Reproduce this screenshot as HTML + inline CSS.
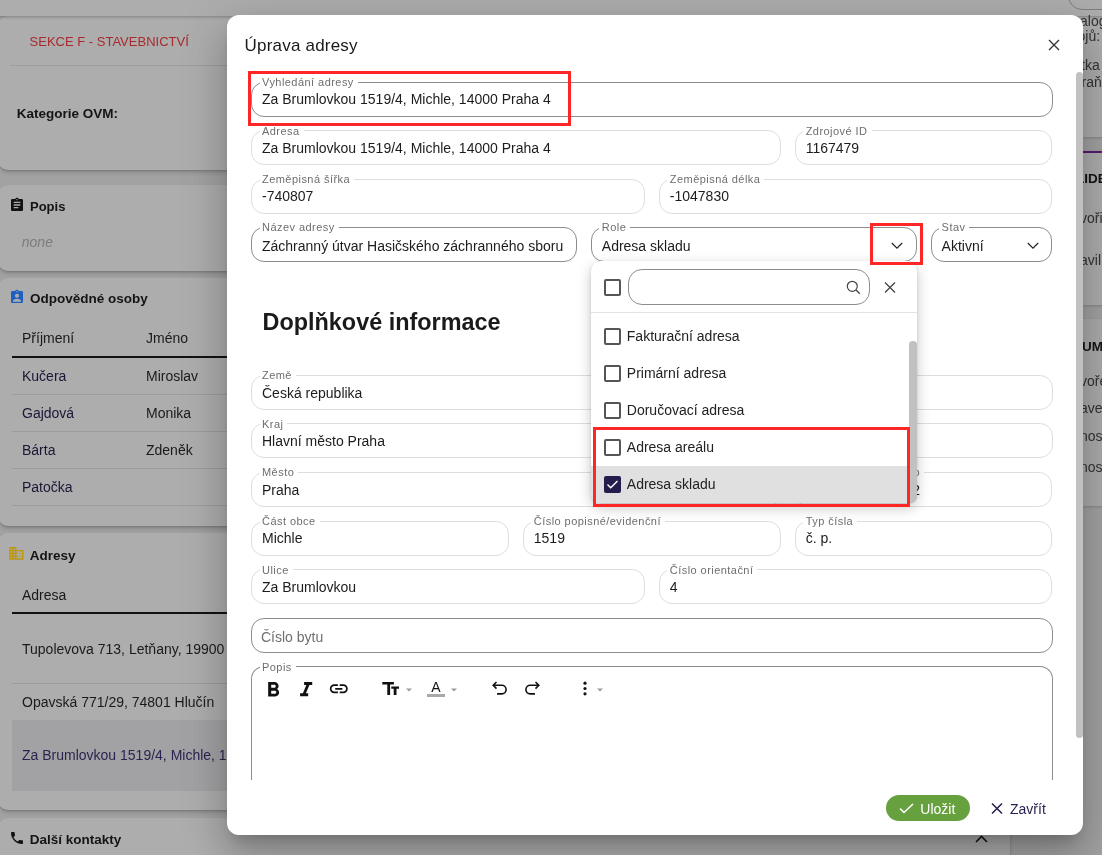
<!DOCTYPE html>
<html><head><meta charset="utf-8"><title>Úprava adresy</title>
<style>
html,body{margin:0;padding:0;}
body{width:1102px;height:855px;overflow:hidden;position:relative;background:#a2a2a2;font-family:"Liberation Sans",sans-serif;}
#w{position:absolute;left:0;top:0;width:1102px;height:855px;will-change:transform;}
.a{position:absolute;}
.t{position:absolute;white-space:nowrap;}
.lab{font-size:11px;line-height:11px;letter-spacing:0.45px;color:#6e6e6e;background:#fff;padding:0 4px 0 2.5px;}
</style></head><body><div id="w">
<div class="a" style="left:-2px;top:16px;width:1012px;height:154px;background:#adadad;border-radius:10px;box-shadow:0 3px 5px -1px rgba(0,0,0,0.2),0 1px 2px 0 rgba(0,0,0,0.12)"></div>
<div class="t" style="left:29.6px;top:35px;font-size:13px;line-height:13px;font-weight:400;color:#a82a2e;font-style:normal;">SEKCE F - STAVEBNICTVÍ</div>
<div class="a" style="left:10px;top:65px;width:990px;height:1px;background:#9d9d9d"></div>
<div class="t" style="left:16.7px;top:107px;font-size:13.5px;line-height:13.5px;font-weight:700;color:#141414;font-style:normal;">Kategorie OVM:</div>
<div class="a" style="left:-2px;top:184.5px;width:1012px;height:86.0px;background:#adadad;border-radius:10px;box-shadow:0 3px 5px -1px rgba(0,0,0,0.2),0 1px 2px 0 rgba(0,0,0,0.12)"></div>
<div class="t" style="left:30px;top:200px;font-size:13px;line-height:13px;font-weight:700;color:#141414;font-style:normal;">Popis</div>
<div class="t" style="left:21.8px;top:235px;font-size:14px;line-height:14px;font-weight:400;color:#7c7c7c;font-style:italic;">none</div>
<div class="a" style="left:-2px;top:277.5px;width:1012px;height:248.5px;background:#adadad;border-radius:10px;box-shadow:0 3px 5px -1px rgba(0,0,0,0.2),0 1px 2px 0 rgba(0,0,0,0.12)"></div>
<div class="t" style="left:30px;top:292px;font-size:13.5px;line-height:13.5px;font-weight:700;color:#141414;font-style:normal;">Odpovědné osoby</div>
<div class="t" style="left:22px;top:331px;font-size:14px;line-height:14px;font-weight:400;color:#1a1a1a;font-style:normal;">Příjmení</div>
<div class="t" style="left:146px;top:331px;font-size:14px;line-height:14px;font-weight:400;color:#1a1a1a;font-style:normal;">Jméno</div>
<div class="a" style="left:12px;top:356px;width:250px;height:2px;background:#111"></div>
<div class="t" style="left:22px;top:369px;font-size:14px;line-height:14px;font-weight:400;color:#1a1636;font-style:normal;">Kučera</div>
<div class="t" style="left:146px;top:369px;font-size:14px;line-height:14px;font-weight:400;color:#1a1a1a;font-style:normal;">Miroslav</div>
<div class="a" style="left:12px;top:394px;width:250px;height:1px;background:#9c9c9c"></div>
<div class="t" style="left:22px;top:406px;font-size:14px;line-height:14px;font-weight:400;color:#1a1636;font-style:normal;">Gajdová</div>
<div class="t" style="left:146px;top:406px;font-size:14px;line-height:14px;font-weight:400;color:#1a1a1a;font-style:normal;">Monika</div>
<div class="a" style="left:12px;top:431px;width:250px;height:1px;background:#9c9c9c"></div>
<div class="t" style="left:22px;top:443px;font-size:14px;line-height:14px;font-weight:400;color:#1a1636;font-style:normal;">Bárta</div>
<div class="t" style="left:146px;top:443px;font-size:14px;line-height:14px;font-weight:400;color:#1a1a1a;font-style:normal;">Zdeněk</div>
<div class="a" style="left:12px;top:468px;width:250px;height:1px;background:#9c9c9c"></div>
<div class="t" style="left:22px;top:480px;font-size:14px;line-height:14px;font-weight:400;color:#1a1636;font-style:normal;">Patočka</div>
<div class="a" style="left:12px;top:505px;width:250px;height:1px;background:#9c9c9c"></div>
<div class="a" style="left:-2px;top:533px;width:1012px;height:276.5px;background:#adadad;border-radius:10px;box-shadow:0 3px 5px -1px rgba(0,0,0,0.2),0 1px 2px 0 rgba(0,0,0,0.12)"></div>
<div class="t" style="left:29.7px;top:549px;font-size:13.5px;line-height:13.5px;font-weight:700;color:#141414;font-style:normal;">Adresy</div>
<div class="t" style="left:22px;top:588px;font-size:14px;line-height:14px;font-weight:400;color:#1a1a1a;font-style:normal;">Adresa</div>
<div class="a" style="left:12px;top:611.5px;width:250px;height:2px;background:#111"></div>
<div class="t" style="left:22px;top:642px;font-size:14px;line-height:14px;font-weight:400;color:#1a1a1a;font-style:normal;">Tupolevova 713, Letňany, 19900</div>
<div class="a" style="left:12px;top:683px;width:250px;height:1px;background:#9c9c9c"></div>
<div class="t" style="left:22px;top:695px;font-size:14px;line-height:14px;font-weight:400;color:#1a1a1a;font-style:normal;">Opavská 771/29, 74801 Hlučín</div>
<div class="a" style="left:12px;top:720px;width:1000px;height:70.5px;background:#a2a2a4"></div>
<div class="t" style="left:22px;top:748px;font-size:14px;line-height:14px;font-weight:400;color:#2a2550;font-style:normal;">Za Brumlovkou 1519/4, Michle, 14000 Praha 4</div>
<div class="a" style="left:-2px;top:818px;width:1012px;height:82px;background:#adadad;border-radius:10px;box-shadow:0 3px 5px -1px rgba(0,0,0,0.2),0 1px 2px 0 rgba(0,0,0,0.12)"></div>
<div class="t" style="left:29.7px;top:833px;font-size:13.5px;line-height:13.5px;font-weight:700;color:#141414;font-style:normal;">Další kontakty</div>
<svg class="a" style="left:8.7px;top:197.2px" width="16" height="16" viewBox="0 0 24 24"><path d="M19 3h-4.18C14.4 1.84 13.3 1 12 1c-1.3 0-2.4.84-2.82 2H5c-1.1 0-2 .9-2 2v14c0 1.1.9 2 2 2h14c1.1 0 2-.9 2-2V5c0-1.1-.9-2-2-2zm-7 0c.55 0 1 .45 1 1s-.45 1-1 1-1-.45-1-1 .45-1 1-1zm2 14H7v-2h7v2zm3-4H7v-2h10v2zm0-4H7V7h10v2z" fill="#111111"/></svg>
<svg class="a" style="left:8.7px;top:289.4px" width="16" height="16" viewBox="0 0 24 24"><path d="M19 3h-4.18C14.4 1.84 13.3 1 12 1c-1.3 0-2.4.84-2.82 2H5c-1.1 0-2 .9-2 2v14c0 1.1.9 2 2 2h14c1.1 0 2-.9 2-2V5c0-1.1-.9-2-2-2zm-7 0c.55 0 1 .45 1 1s-.45 1-1 1-1-.45-1-1 .45-1 1-1zm0 4c1.66 0 3 1.34 3 3s-1.34 3-3 3-3-1.34-3-3 1.34-3 3-3zm6 12H6v-1.4c0-2 4-3.1 6-3.1s6 1.1 6 3.1V19z" fill="#1f5fc0"/></svg>
<svg class="a" style="left:8.4px;top:545.1px" width="16.8" height="16.8" viewBox="0 0 24 24"><path d="M12 7V3H2v18h20V7H12zM6 19H4v-2h2v2zm0-4H4v-2h2v2zm0-4H4V9h2v2zm0-4H4V5h2v2zm4 12H8v-2h2v2zm0-4H8v-2h2v2zm0-4H8V9h2v2zm0-4H8V5h2v2zm10 12h-8v-2h2v-2h-2v-2h2v-2h-2V9h8v10zm-2-8h-2v2h2v-2zm0 4h-2v2h2v-2z" fill="#bb960e"/></svg>
<svg class="a" style="left:8.7px;top:829.6px" width="16" height="16" viewBox="0 0 24 24"><path d="M6.62 10.79c1.44 2.83 3.76 5.14 6.59 6.59l2.2-2.2c.27-.27.67-.36 1.02-.24 1.12.37 2.33.57 3.57.57.55 0 1 .45 1 1V20c0 .55-.45 1-1 1-9.39 0-17-7.61-17-17 0-.55.45-1 1-1h3.5c.55 0 1 .45 1 1 0 1.25.2 2.45.57 3.57.11.35.03.74-.25 1.02l-2.2 2.2z" fill="#111111"/></svg>
<svg class="a" style="left:975px;top:835px" width="13" height="8" viewBox="0 0 13 8"><path d="M1 7L6.5 1.5 12 7" stroke="#141414" stroke-width="1.6" fill="none"/></svg>
<div class="a" style="left:1022px;top:-10px;width:100px;height:146.5px;background:#adadad;border-radius:10px;box-shadow:0 1px 3px rgba(0,0,0,0.18)"></div>
<div class="a" style="left:-5px;top:-20px;width:1200px;height:36px;background:#adadad;box-shadow:0 1px 3px rgba(0,0,0,0.25)"></div>
<div class="a" style="left:1067.5px;top:-20px;width:60px;height:29.5px;border:1px solid #7e7e7e;border-radius:14px;box-sizing:border-box"></div>
<div class="t" style="left:1080px;top:14px;font-size:14px;line-height:14px;font-weight:400;color:#333333;font-style:normal;">alog</div>
<div class="t" style="left:1077.5px;top:29px;font-size:14px;line-height:14px;font-weight:400;color:#333333;font-style:normal;">ojů:</div>
<div class="t" style="left:1081px;top:58px;font-size:14px;line-height:14px;font-weight:400;color:#333333;font-style:normal;">tka</div>
<div class="t" style="left:1081.5px;top:75px;font-size:14px;line-height:14px;font-weight:400;color:#333333;font-style:normal;">raň</div>
<div class="a" style="left:1022px;top:150.5px;width:100px;height:154.0px;background:#adadad;border-radius:10px;box-shadow:0 1px 3px rgba(0,0,0,0.18)"></div>
<div class="a" style="left:1022px;top:150.5px;width:100px;height:2px;background:#5b1877"></div>
<div class="t" style="left:1076px;top:172px;font-size:13.5px;line-height:13.5px;font-weight:700;color:#141414;font-style:normal;">LIDE</div>
<div class="t" style="left:1080px;top:211px;font-size:14px;line-height:14px;font-weight:400;color:#333333;font-style:normal;">voři</div>
<div class="t" style="left:1080px;top:253px;font-size:14px;line-height:14px;font-weight:400;color:#333333;font-style:normal;">avil</div>
<div class="a" style="left:1022px;top:318.5px;width:100px;height:187.0px;background:#adadad;border-radius:10px;box-shadow:0 1px 3px rgba(0,0,0,0.18)"></div>
<div class="t" style="left:1082px;top:340px;font-size:13.5px;line-height:13.5px;font-weight:700;color:#141414;font-style:normal;">UM</div>
<div class="t" style="left:1080px;top:374px;font-size:14px;line-height:14px;font-weight:400;color:#333333;font-style:normal;">voře</div>
<div class="t" style="left:1080px;top:401px;font-size:14px;line-height:14px;font-weight:400;color:#333333;font-style:normal;">ave</div>
<div class="t" style="left:1080px;top:429px;font-size:14px;line-height:14px;font-weight:400;color:#333333;font-style:normal;">nos</div>
<div class="t" style="left:1080px;top:460px;font-size:14px;line-height:14px;font-weight:400;color:#333333;font-style:normal;">nos</div>
<div class="a" style="left:227px;top:15px;width:856px;height:819.5px;background:#fff;border-radius:12px;box-shadow:0px 11px 15px -7px rgba(0,0,0,0.2),0px 24px 38px 3px rgba(0,0,0,0.14),0px 9px 46px 8px rgba(0,0,0,0.12)"></div>
<div class="t" style="left:244.6px;top:37px;font-size:17px;line-height:17px;font-weight:400;color:#1a1a1a;font-style:normal;letter-spacing:0.2px;">Úprava adresy</div>
<svg class="a" style="left:1047.5px;top:38.8px" width="12" height="12" viewBox="0 0 12 12"><path d="M1 1l10 10M11 1L1 11" stroke="#333" stroke-width="1.3"/></svg>
<div class="a" style="left:1076px;top:71.5px;width:7px;height:666px;background:#c1c1c1;border-radius:3.5px"></div>
<div class="a" style="left:251.0px;top:81.7px;width:801.5px;height:35px;border:1px solid #8c8c8c;border-radius:13px;box-sizing:border-box;background:#fff"></div>
<div class="t lab" style="left:259.5px;top:77px">Vyhledání adresy</div>
<div class="t" style="left:262.0px;top:92px;font-size:14px;line-height:14px;font-weight:400;color:#1c1c1c;font-style:normal;">Za Brumlovkou 1519/4, Michle, 14000 Praha 4</div>
<div class="a" style="left:251.0px;top:130.15px;width:529.7px;height:35px;border:1px solid #dedede;border-radius:13px;box-sizing:border-box;background:#fff"></div>
<div class="t lab" style="left:259.5px;top:126px">Adresa</div>
<div class="t" style="left:262.0px;top:141px;font-size:14px;line-height:14px;font-weight:400;color:#1c1c1c;font-style:normal;">Za Brumlovkou 1519/4, Michle, 14000 Praha 4</div>
<div class="a" style="left:794.7px;top:130.15px;width:257.79999999999995px;height:35px;border:1px solid #dedede;border-radius:13px;box-sizing:border-box;background:#fff"></div>
<div class="t lab" style="left:803.2px;top:126px">Zdrojové ID</div>
<div class="t" style="left:805.7px;top:141px;font-size:14px;line-height:14px;font-weight:400;color:#1c1c1c;font-style:normal;">1167479</div>
<div class="a" style="left:251.0px;top:178.6px;width:393.79999999999995px;height:35px;border:1px solid #dedede;border-radius:13px;box-sizing:border-box;background:#fff"></div>
<div class="t lab" style="left:259.5px;top:174px">Zeměpisná šířka</div>
<div class="t" style="left:262.0px;top:189px;font-size:14px;line-height:14px;font-weight:400;color:#1c1c1c;font-style:normal;">-740807</div>
<div class="a" style="left:658.8px;top:178.6px;width:393.70000000000005px;height:35px;border:1px solid #dedede;border-radius:13px;box-sizing:border-box;background:#fff"></div>
<div class="t lab" style="left:667.3px;top:174px">Zeměpisná délka</div>
<div class="t" style="left:669.8px;top:189px;font-size:14px;line-height:14px;font-weight:400;color:#1c1c1c;font-style:normal;">-1047830</div>
<div class="a" style="left:251.0px;top:227.05px;width:325.79999999999995px;height:35px;border:1px solid #8c8c8c;border-radius:13px;box-sizing:border-box;background:#fff"></div>
<div class="t lab" style="left:259.5px;top:222px">Název adresy</div>
<div class="t" style="left:262.0px;top:239px;font-size:14px;line-height:14px;font-weight:400;color:#1c1c1c;font-style:normal;">Záchranný útvar Hasičského záchranného sboru</div>
<div class="a" style="left:590.8px;top:227.05px;width:325.80000000000007px;height:35px;border:1px solid #8c8c8c;border-radius:13px;box-sizing:border-box;background:#fff"></div>
<div class="t lab" style="left:599.3px;top:222px">Role</div>
<div class="t" style="left:601.8px;top:239px;font-size:14px;line-height:14px;font-weight:400;color:#1c1c1c;font-style:normal;">Adresa skladu</div>
<svg class="a" style="left:890.6px;top:241.55px" width="12" height="8" viewBox="0 0 12 8"><path d="M0.8 1L6 6.2 11.2 1" stroke="#222" stroke-width="1.2" fill="none"/></svg>
<div class="a" style="left:930.6px;top:227.05px;width:121.89999999999998px;height:35px;border:1px solid #8c8c8c;border-radius:13px;box-sizing:border-box;background:#fff"></div>
<div class="t lab" style="left:939.1px;top:222px">Stav</div>
<div class="t" style="left:941.6px;top:239px;font-size:14px;line-height:14px;font-weight:400;color:#1c1c1c;font-style:normal;">Aktivní</div>
<svg class="a" style="left:1026.5px;top:241.55px" width="12" height="8" viewBox="0 0 12 8"><path d="M0.8 1L6 6.2 11.2 1" stroke="#222" stroke-width="1.2" fill="none"/></svg>
<div class="t" style="left:262.6px;top:311px;font-size:23.4px;line-height:23.4px;font-weight:700;color:#1a1a1a;font-style:normal;">Doplňkové informace</div>
<div class="a" style="left:251.0px;top:374.8px;width:801.5px;height:35px;border:1px solid #dedede;border-radius:13px;box-sizing:border-box;background:#fff"></div>
<div class="t lab" style="left:259.5px;top:370px">Země</div>
<div class="t" style="left:262.0px;top:386px;font-size:14px;line-height:14px;font-weight:400;color:#1c1c1c;font-style:normal;">Česká republika</div>
<div class="a" style="left:251.0px;top:423.40000000000003px;width:801.5px;height:35px;border:1px solid #dedede;border-radius:13px;box-sizing:border-box;background:#fff"></div>
<div class="t lab" style="left:259.5px;top:419px">Kraj</div>
<div class="t" style="left:262.0px;top:434px;font-size:14px;line-height:14px;font-weight:400;color:#1c1c1c;font-style:normal;">Hlavní město Praha</div>
<div class="a" style="left:251.0px;top:472.0px;width:529.7px;height:35px;border:1px solid #dedede;border-radius:13px;box-sizing:border-box;background:#fff"></div>
<div class="t lab" style="left:259.5px;top:467px">Město</div>
<div class="t" style="left:262.0px;top:483px;font-size:14px;line-height:14px;font-weight:400;color:#1c1c1c;font-style:normal;">Praha</div>
<div class="a" style="left:794.7px;top:472.0px;width:257.79999999999995px;height:35px;border:1px solid #dedede;border-radius:13px;box-sizing:border-box;background:#fff"></div>
<div class="t lab" style="right:178px;top:467px">Městská část číslo</div>
<div class="t" style="left:0px;top:483px;font-size:14px;line-height:14px;font-weight:400;color:#1c1c1c;font-style:normal;right:182px;left:auto">Praha 4 - Michle 12</div>
<div class="a" style="left:251.0px;top:520.6px;width:257.8px;height:35px;border:1px solid #dedede;border-radius:13px;box-sizing:border-box;background:#fff"></div>
<div class="t lab" style="left:259.5px;top:516px">Část obce</div>
<div class="t" style="left:262.0px;top:531px;font-size:14px;line-height:14px;font-weight:400;color:#1c1c1c;font-style:normal;">Michle</div>
<div class="a" style="left:522.8px;top:520.6px;width:257.9000000000001px;height:35px;border:1px solid #dedede;border-radius:13px;box-sizing:border-box;background:#fff"></div>
<div class="t lab" style="left:531.3px;top:516px">Číslo popisné/evidenční</div>
<div class="t" style="left:533.8px;top:531px;font-size:14px;line-height:14px;font-weight:400;color:#1c1c1c;font-style:normal;">1519</div>
<div class="a" style="left:794.7px;top:520.6px;width:257.79999999999995px;height:35px;border:1px solid #dedede;border-radius:13px;box-sizing:border-box;background:#fff"></div>
<div class="t lab" style="left:803.2px;top:516px">Typ čísla</div>
<div class="t" style="left:805.7px;top:531px;font-size:14px;line-height:14px;font-weight:400;color:#1c1c1c;font-style:normal;">č. p.</div>
<div class="a" style="left:251.0px;top:569.2px;width:393.79999999999995px;height:35px;border:1px solid #dedede;border-radius:13px;box-sizing:border-box;background:#fff"></div>
<div class="t lab" style="left:259.5px;top:565px">Ulice</div>
<div class="t" style="left:262.0px;top:580px;font-size:14px;line-height:14px;font-weight:400;color:#1c1c1c;font-style:normal;">Za Brumlovkou</div>
<div class="a" style="left:658.8px;top:569.2px;width:393.70000000000005px;height:35px;border:1px solid #dedede;border-radius:13px;box-sizing:border-box;background:#fff"></div>
<div class="t lab" style="left:667.3px;top:565px">Číslo orientační</div>
<div class="t" style="left:669.8px;top:580px;font-size:14px;line-height:14px;font-weight:400;color:#1c1c1c;font-style:normal;">4</div>
<div class="a" style="left:251.0px;top:617.8px;width:801.5px;height:35px;border:1px solid #8c8c8c;border-radius:13px;box-sizing:border-box;background:#fff"></div>
<div class="t" style="left:261.0px;top:630px;font-size:14px;line-height:14px;font-weight:400;color:#6f6f6f;font-style:normal;">Číslo bytu</div>
<div class="a" style="left:251.0px;top:666.4000000000001px;width:801.5px;height:114.09999999999991px;border:1px solid #8c8c8c;border-bottom:none;border-radius:13px 13px 0 0;box-sizing:border-box;background:#fff"></div>
<div class="t lab" style="left:259.5px;top:662px">Popis</div>
<svg class="a" style="left:260.7px;top:677.7px" width="24.5" height="24.5" viewBox="0 0 24 24"><path d="M15.6 10.79c.97-.67 1.65-1.77 1.65-2.79 0-2.26-1.75-4-4-4H7v14h7.04c2.09 0 3.71-1.7 3.71-3.79 0-1.52-.86-2.82-2.15-3.42zM10 6.5h3c.83 0 1.5.67 1.5 1.5s-.67 1.5-1.5 1.5h-3v-3zm3.5 9H10v-3h3.5c.83 0 1.5.67 1.5 1.5s-.67 1.5-1.5 1.5z" fill="#111"/></svg>
<svg class="a" style="left:293.7px;top:677.7px" width="24.3" height="24.3" viewBox="0 0 24 24"><path d="M10 4v3h2.21l-3.42 8H6v3h8v-3h-2.21l3.42-8H18V4z" fill="#111"/></svg>
<svg class="a" style="left:328px;top:677.5px" width="21.6" height="21.6" viewBox="0 0 24 24"><path d="M3.9 12c0-1.71 1.39-3.1 3.1-3.1h4V7H7c-2.76 0-5 2.24-5 5s2.24 5 5 5h4v-1.9H7c-1.71 0-3.1-1.39-3.1-3.1zM8 13h8v-2H8v2zm9-6h-4v1.9h4c1.71 0 3.1 1.39 3.1 3.1s-1.39 3.1-3.1 3.1h-4V17h4c2.76 0 5-2.24 5-5s-2.24-5-5-5z" fill="#111"/></svg>
<svg class="a" style="left:380px;top:680px" width="22" height="18" viewBox="0 0 22 18"><path d="M2.3 2h11.6v2.5H10.1v10.4H7.3V4.5H2.3z M11.3 6.5h7.7v2.2h-2.5v6.2h-2.8V8.7h-2.4z" fill="#111"/></svg>
<svg class="a" style="left:406px;top:687.5px" width="6" height="4" viewBox="0 0 6 4"><path d="M0 0.5h6L3 3.5z" fill="#9a9a9a"/></svg>
<div class="t" style="left:431.2px;top:679.6px;font-size:14px;line-height:14px;color:#111">A</div>
<div class="a" style="left:427px;top:694px;width:18px;height:2.7px;background:#a9a9a9"></div>
<svg class="a" style="left:451px;top:687.5px" width="6" height="4" viewBox="0 0 6 4"><path d="M0 0.5h6L3 3.5z" fill="#9a9a9a"/></svg>
<svg class="a" style="left:492px;top:681px" width="16" height="14" viewBox="0 0 16 14"><path d="M4.5 1L1.2 4.3 4.5 7.6M1.5 4.3h8.3a4.3 4.3 0 0 1 0 8.6H5" stroke="#111" stroke-width="1.6" fill="none"/></svg>
<svg class="a" style="left:524px;top:681px" width="16" height="14" viewBox="0 0 16 14"><path d="M11.5 1l3.3 3.3-3.3 3.3M14.5 4.3H6.2a4.3 4.3 0 0 0 0 8.6H11" stroke="#111" stroke-width="1.6" fill="none"/></svg>
<svg class="a" style="left:582.5px;top:681px" width="4" height="15" viewBox="0 0 4 15"><circle cx="2" cy="2.2" r="1.6" fill="#111"/><circle cx="2" cy="7.5" r="1.6" fill="#111"/><circle cx="2" cy="12.8" r="1.6" fill="#111"/></svg>
<svg class="a" style="left:597px;top:687.5px" width="6" height="4" viewBox="0 0 6 4"><path d="M0 0.5h6L3 3.5z" fill="#9a9a9a"/></svg>
<div class="a" style="left:886.4px;top:795px;width:83.5px;height:26px;background:#67a03e;border-radius:13px"></div>
<svg class="a" style="left:899px;top:803px" width="15" height="11" viewBox="0 0 15 11"><path d="M1 5.5l4 4L14 1" stroke="#fff" stroke-width="1.6" fill="none"/></svg>
<div class="t" style="left:920.3px;top:802px;font-size:14px;line-height:14px;font-weight:400;color:#ffffff;font-style:normal;">Uložit</div>
<svg class="a" style="left:990.5px;top:802.5px" width="12" height="11" viewBox="0 0 12 11"><path d="M1 0.5l10 10M11 0.5l-10 10" stroke="#241f4d" stroke-width="1.5"/></svg>
<div class="t" style="left:1010px;top:802px;font-size:14px;line-height:14px;font-weight:400;color:#241f4d;font-style:normal;">Zavřít</div>
<div class="a" style="left:590.5px;top:261.2px;width:326px;height:241.8px;background:#fff;border-radius:10px;box-shadow:0 5px 14px rgba(0,0,0,0.22),0 1px 3px rgba(0,0,0,0.12);overflow:hidden"></div>
<div class="a" style="left:604px;top:278.5px;width:17px;height:17px;border:2px solid #555;border-radius:2px;box-sizing:border-box"></div>
<div class="a" style="left:627.8px;top:269.3px;width:242px;height:35.5px;border:1px solid #8c8c8c;border-radius:14px;box-sizing:border-box"></div>
<svg class="a" style="left:846px;top:280px" width="15" height="15" viewBox="0 0 15 15"><circle cx="6.3" cy="6.3" r="5" stroke="#444" stroke-width="1.2" fill="none"/><path d="M10 10l3.8 3.8" stroke="#444" stroke-width="1.3"/></svg>
<svg class="a" style="left:883.7px;top:282px" width="12" height="11" viewBox="0 0 12 11"><path d="M1 0.5l10 10M11 0.5l-10 10" stroke="#444" stroke-width="1.25"/></svg>
<div class="a" style="left:590.5px;top:312px;width:326px;height:1px;background:#e3e3e3"></div>
<div class="a" style="left:604px;top:328px;width:17px;height:17px;border:2px solid #555;border-radius:2px;box-sizing:border-box"></div>
<div class="t" style="left:626.8px;top:329px;font-size:14px;line-height:14px;font-weight:400;color:#222222;font-style:normal;">Fakturační adresa</div>
<div class="a" style="left:604px;top:365px;width:17px;height:17px;border:2px solid #555;border-radius:2px;box-sizing:border-box"></div>
<div class="t" style="left:626.8px;top:366px;font-size:14px;line-height:14px;font-weight:400;color:#222222;font-style:normal;">Primární adresa</div>
<div class="a" style="left:604px;top:402px;width:17px;height:17px;border:2px solid #555;border-radius:2px;box-sizing:border-box"></div>
<div class="t" style="left:626.8px;top:403px;font-size:14px;line-height:14px;font-weight:400;color:#222222;font-style:normal;">Doručovací adresa</div>
<div class="a" style="left:604px;top:439px;width:17px;height:17px;border:2px solid #555;border-radius:2px;box-sizing:border-box"></div>
<div class="t" style="left:626.8px;top:440px;font-size:14px;line-height:14px;font-weight:400;color:#222222;font-style:normal;">Adresa areálu</div>
<div class="a" style="left:590.5px;top:466px;width:318px;height:37px;background:#e0e0e0;border-radius:0 0 0 10px"></div>
<svg class="a" style="left:604px;top:476px" width="17" height="17" viewBox="0 0 17 17"><rect x="0" y="0" width="17" height="17" rx="2" fill="#231c4c"/><path d="M3.5 8.5l3.2 3.2 6.8-6.8" stroke="#fff" stroke-width="1.4" fill="none"/></svg>
<div class="t" style="left:626.8px;top:477px;font-size:14px;line-height:14px;font-weight:400;color:#222222;font-style:normal;">Adresa skladu</div>
<div class="a" style="left:909px;top:341px;width:7.5px;height:162px;background:#c1c1c1;border-radius:3.5px 3.5px 6px 0"></div>
<div class="a" style="left:248px;top:71px;width:323px;height:54.5px;border:3px solid #fe2626;box-sizing:border-box"></div>
<div class="a" style="left:593px;top:427.3px;width:317px;height:79.5px;border:3px solid #fe2626;box-sizing:border-box"></div>
<div class="a" style="left:870px;top:223px;width:52.6px;height:41.5px;border:3px solid #fe2626;box-sizing:border-box"></div>
</div></body></html>
